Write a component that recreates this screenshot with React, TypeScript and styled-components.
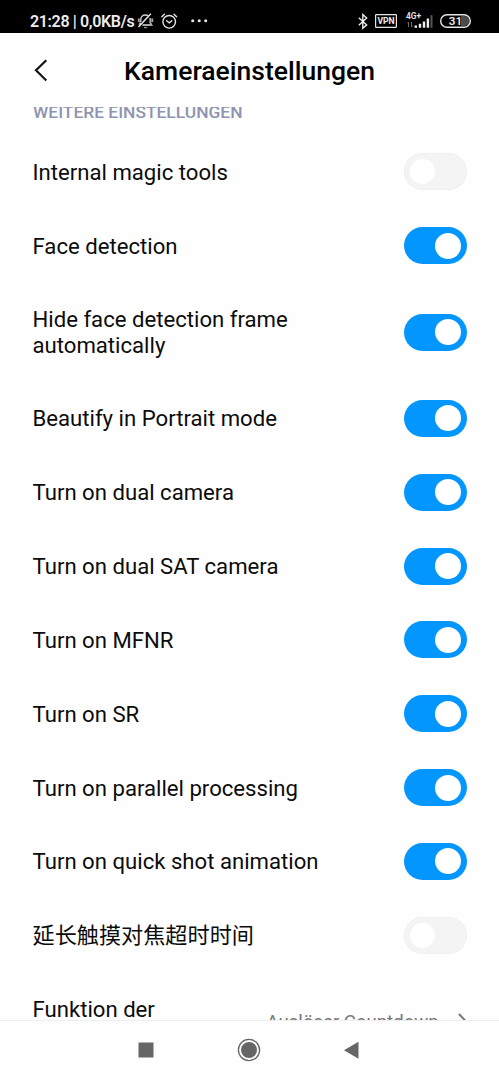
import React from "react";
import styled, { createGlobalStyle } from "styled-components";

const GlobalStyle = createGlobalStyle`
  *, *::before, *::after { box-sizing: border-box; }
  body {
    margin: 0;
    background: #fefefe;
    color: #0c0c0c;
    font-family: Roboto, "Noto Sans CJK SC", sans-serif;
  }
`;

const Screen = styled.div`
  width: 499px;
  height: 1080px;
  display: flex;
  flex-direction: column;
  overflow: hidden;
  background: #fefefe;
`;

const StatusBar = styled.div`
  flex: none;
  height: 33px;
  padding: 9px 28px 0 30px;
  display: flex;
  justify-content: space-between;
  align-items: flex-start;
  background: #000;
  color: #ececec;
`;

const StatusGroup = styled.div`
  height: 24px;
  display: flex;
  align-items: center;
`;

const Clock = styled.span`
  width: 106px;
  font-size: 16px;
  font-weight: 600;
  line-height: 24px;
  letter-spacing: -0.35px;
  margin-top: 1px;
  white-space: nowrap;
`;

const StatusIcon = styled.svg<{ $gap?: number }>`
  display: block;
  flex: none;
  margin-left: ${(p) => p.$gap ?? 0}px;
  overflow: visible;
`;

const Header = styled.header`
  flex: none;
  height: 74px;
  padding: 0 33px;
  display: grid;
  grid-template-columns: 16px 1fr 16px;
  align-items: center;
`;

const BackButton = styled.button`
  width: 16px;
  height: 24px;
  padding: 0;
  border: 0;
  background: none;
  svg { display: block; overflow: visible; }
`;

const Title = styled.h1`
  margin: 2px 0 0;
  text-align: center;
  font-size: 26.5px;
  font-weight: 500;
  line-height: 32px;
  color: #000;
`;

const List = styled.main`
  flex: 1;
  min-height: 0;
  overflow: hidden;
`;

const SectionLabel = styled.h2`
  height: 33px;
  margin: -5px 0 0;
  padding-left: 33px;
  font-size: 17.4px;
  font-weight: 500;
  line-height: 20px;
  color: #8f94b0;
`;

const Row = styled.div<{ $tall?: boolean }>`
  height: ${(p) => (p.$tall ? 98.8 : 73.85)}px;
  padding: 0 32.5px 0 32.5px;
  display: flex;
  align-items: center;
  justify-content: space-between;
`;

const Label = styled.span<{ $short?: boolean }>`
  width: ${(p) => (p.$short ? "150px" : "300px")};
  min-height: ${(p) => (p.$short ? 52 : 26)}px;
  flex: none;
  font-size: 22.15px;
  line-height: 26px;
`;

const Switch = styled.span<{ $on: boolean }>`
  flex: none;
  width: 62.5px;
  height: 37px;
  padding: 0 5.5px;
  display: flex;
  align-items: center;
  justify-content: ${(p) => (p.$on ? "flex-end" : "flex-start")};
  border-radius: 19px;
  background: ${(p) => (p.$on ? "#0496ff" : "#f4f4f4")};
  box-shadow: ${(p) => (p.$on ? "none" : "inset 0 0 0 1px #f0f0f0")};
`;

const Knob = styled.span<{ $on: boolean }>`
  width: ${(p) => (p.$on ? 26 : 25)}px;
  height: ${(p) => (p.$on ? 26 : 25)}px;
  border-radius: 50%;
  background: #fff;
`;

const Value = styled.span`
  display: flex;
  align-items: center;
  gap: 19px;
  padding-top: 1px;
  font-size: 18.6px;
  line-height: 22px;
  color: #777;
  white-space: nowrap;
  svg { display: block; margin-right: -1px; }
`;

const NavBar = styled.nav`
  flex: none;
  height: 60px;
  padding: 0 1px 2px 0;
  display: flex;
  justify-content: center;
  align-items: center;
  gap: 79px;
  border-top: 1px solid #efefef;
  background: #fefefe;
`;

const NavIcon = styled.svg`
  display: block;
  width: 24px;
  height: 24px;
`;

const settings: { label: string; on: boolean; tall?: boolean }[] = [
  { label: "Internal magic tools", on: false },
  { label: "Face detection", on: true },
  { label: "Hide face detection frame automatically", on: true, tall: true },
  { label: "Beautify in Portrait mode", on: true },
  { label: "Turn on dual camera", on: true },
  { label: "Turn on dual SAT camera", on: true },
  { label: "Turn on MFNR", on: true },
  { label: "Turn on SR", on: true },
  { label: "Turn on parallel processing", on: true },
  { label: "Turn on quick shot animation", on: true },
  { label: "延长触摸对焦超时时间", on: false },
];

const MutedBell = () => (
  <StatusIcon $gap={1} width="17" height="16" viewBox="0 0 17 16" fill="none" strokeWidth="1.4">
    <path d="M3.8 9V6.5C3.8 3.600 5.600 2 8.500 2c1 0 1.900.2 2.600.6" stroke="#d0d0d0" />
    <path d="M13.200 5v4.500l1.300 2.500H5.500M1.800 5.500v3.500M15.300 5.500v3.500M3.600 9.500 2.300 12" stroke="#a8a8a8" strokeWidth="1.800" />
    <path d="M7 14.500h3.200" stroke="#8a8a8a" />
    <path d="M1.500 14 13.800.8" stroke="#ececec" />
  </StatusIcon>
);

const AlarmClock = () => (
  <StatusIcon $gap={7} width="17" height="16" viewBox="0 0 17 16" fill="none" stroke="#e4e4e4" strokeWidth="1.4" strokeLinecap="round">
    <circle cx="8.2" cy="8.8" r="6.3" />
    <path d="M5.6 7.8 8.2 9.900 10.800 7.800M.8 3.700 3.400 1.200M15.600 3.700 13 1.200" />
  </StatusIcon>
);

const Dots = () => (
  <StatusIcon $gap={12.5} width="17" height="16" viewBox="0 0 17 16" fill="#e8e8e8">
    <circle cx="1.7" cy="7.8" r="1.5" />
    <circle cx="8.2" cy="7.8" r="1.5" />
    <circle cx="14.700" cy="7.8" r="1.5" />
  </StatusIcon>
);

const Bluetooth = () => (
  <StatusIcon width="10" height="16" viewBox="0 0 10 16" fill="none" stroke="#ececec" strokeWidth="1.4">
    <path d="M.8 4.7 8.700 11.900 4.800 15.300V1.500l3.900 3.600L.8 12.300" />
  </StatusIcon>
);

const Vpn = () => (
  <StatusIcon $gap={7} width="22" height="14" viewBox="0 0 22 14">
    <rect x=".6" y=".6" width="20.8" height="12.8" rx=".6" fill="none" stroke="#e4e4e4" strokeWidth="1.2" />
    <text x="11" y="10" textAnchor="middle" fontSize="8.600" fontWeight="700" fill="#ececec">VPN</text>
  </StatusIcon>
);

const Signal = () => (
  <StatusIcon $gap={8.5} width="28" height="16" viewBox="0 0 28 16">
    <text x="0" y="6" fontSize="8.400" fontWeight="600" fill="#e4e4e4">4G+</text>
    <path d="M2.5 9v5M1.5 10.2l1-1.2M5.5 9v5l1-1.2" fill="none" stroke="#777" strokeWidth=".9" />
    <path d="M8.500 12.500H11v2.300H8.500zM12.800 10.800h2.400v4h-2.400zM16.800 8.500h2.400v6.300h-2.400zM20.700 5.500h2.400v9.300h-2.400z" fill="#f0f0f0" />
    <path d="M24.500 2.200h2v12.600h-2z" fill="#555" />
  </StatusIcon>
);

const Battery = () => (
  <StatusIcon $gap={6.5} width="31" height="14" viewBox="0 0 31 14">
    <path d="M21 2h3.500a5 5 0 0 1 0 10H21z" fill="#4a4a4a" />
    <rect x=".7" y=".7" width="29.6" height="12.6" rx="6.3" fill="none" stroke="#e4e4e4" strokeWidth="1.4" />
    <text x="15.5" y="11.2" textAnchor="middle" fontSize="11.800" fontWeight="600" fill="#ececec">31</text>
  </StatusIcon>
);

export default function App() {
  return (
    <>
      <GlobalStyle />
      <Screen>
        <StatusBar>
          <StatusGroup>
            <Clock>21:28 | 0,0KB/s</Clock>
            <MutedBell />
            <AlarmClock />
            <Dots />
          </StatusGroup>
          <StatusGroup>
            <Bluetooth />
            <Vpn />
            <Signal />
            <Battery />
          </StatusGroup>
        </StatusBar>
        <Header>
          <BackButton aria-label="Zurück">
            <svg width="16" height="24" viewBox="0 0 16 24" fill="none" stroke="#161616" strokeWidth="2.2">
              <path d="M13.3 2.2 3 12.3l10.3 10.2" />
            </svg>
          </BackButton>
          <Title>Kameraeinstellungen</Title>
        </Header>
        <List>
          <SectionLabel>WEITERE EINSTELLUNGEN</SectionLabel>
          {settings.map((s) => (
            <Row key={s.label} $tall={s.tall}>
              <Label>{s.label}</Label>
              <Switch role="switch" aria-checked={s.on} $on={s.on}>
                <Knob $on={s.on} />
              </Switch>
            </Row>
          ))}
          <Row $tall>
            <Label $short>Funktion der</Label>
            <Value>
              Auslöser Countdown
              <svg width="10" height="18" viewBox="0 0 10 18" fill="none" stroke="#777" strokeWidth="2">
                <path d="m1 1 7.5 8L1 17" />
              </svg>
            </Value>
          </Row>
        </List>
        <NavBar>
          <NavIcon viewBox="0 0 24 24"><path d="M4.5 4.5h15v15h-15z" fill="#666" /></NavIcon>
          <NavIcon viewBox="0 0 24 24">
            <circle cx="12" cy="12" r="10.6" fill="none" stroke="#666" strokeWidth="1.3" />
            <circle cx="12" cy="12" r="8" fill="#666" />
          </NavIcon>
          <NavIcon viewBox="0 0 24 24"><path d="M18.5 3.7v17L4 12.2z" fill="#666" /></NavIcon>
        </NavBar>
      </Screen>
    </>
  );
}
